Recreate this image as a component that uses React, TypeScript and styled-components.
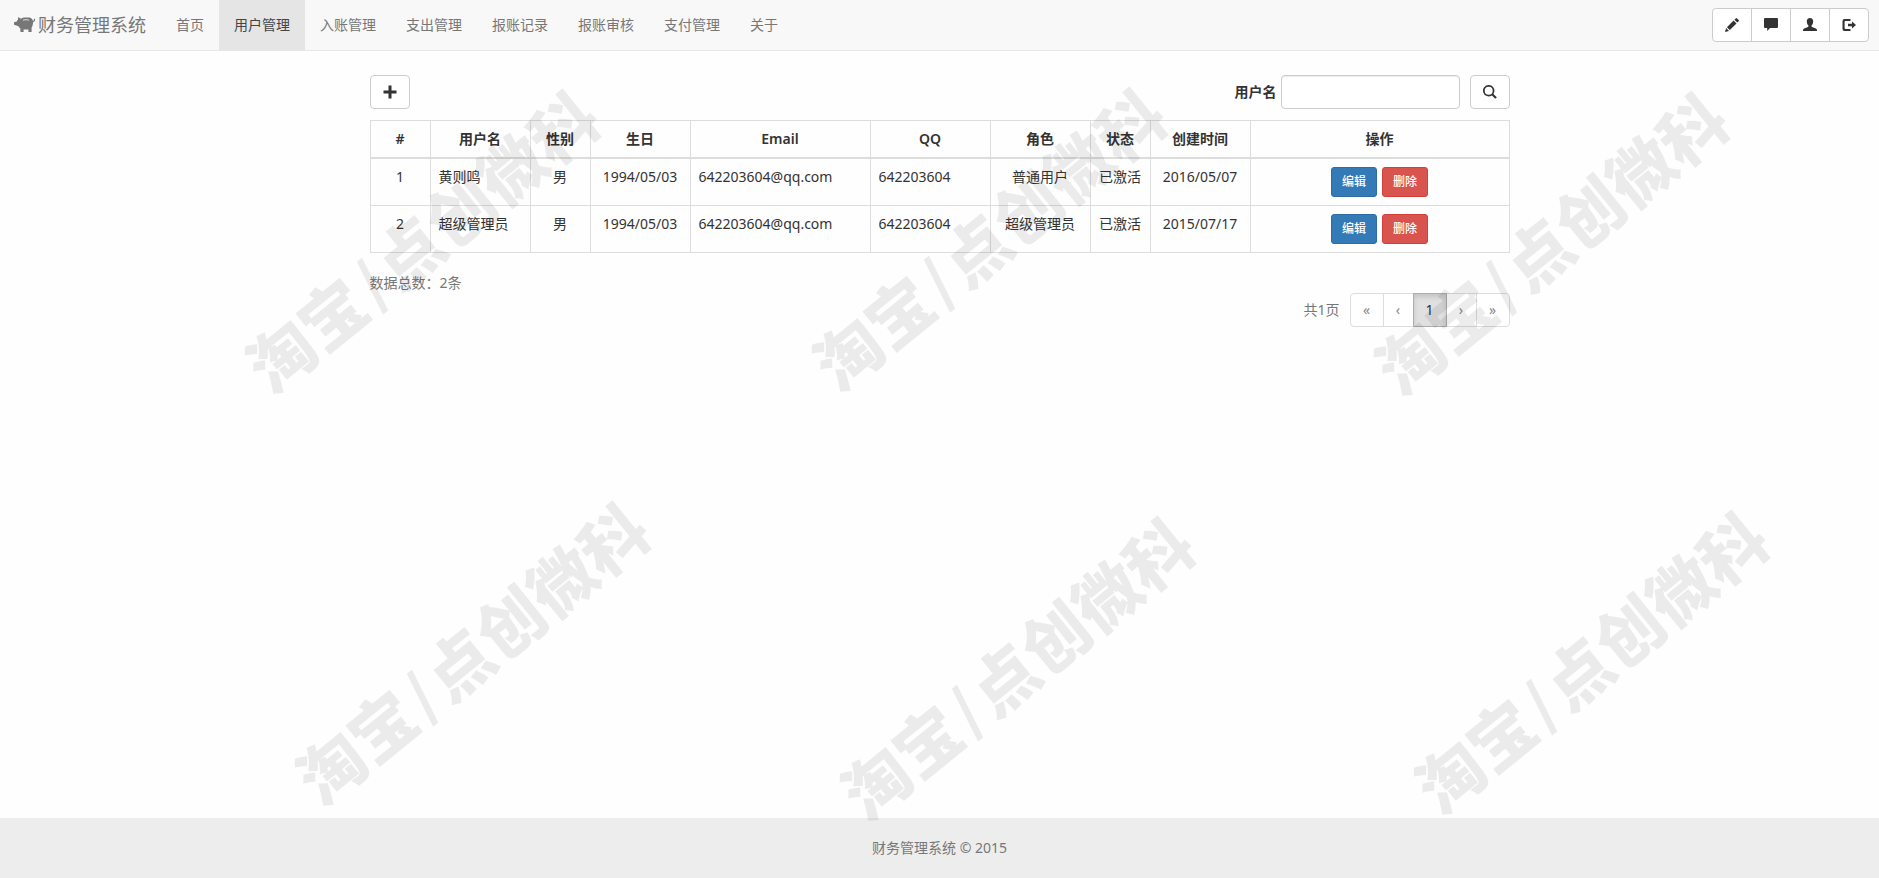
import React from "react";
import styled, { createGlobalStyle, css } from "styled-components";

const GlobalStyle = createGlobalStyle`
  *, *::before, *::after { box-sizing: border-box; }
  body {
    margin: 0;
    background: #fefefe;
    color: #333;
    font-family: "Noto Sans", "Noto Sans CJK SC", sans-serif;
    font-size: 14px;
    line-height: 20px;
  }
  button, input { font: inherit; color: inherit; }
`;

const Page = styled.div`
  position: relative;
  display: flex;
  flex-direction: column;
  min-height: 100vh;
  overflow: hidden;
`;

const Navbar = styled.header`
  display: flex;
  align-items: center;
  padding-right: 10px;
  background: #f8f8f8;
  border-bottom: 1px solid #e7e7e7;
`;

const Brand = styled.a`
  display: flex;
  align-items: center;
  gap: 2px;
  height: 50px;
  padding: 0 15px 0 14px;
  color: #777;
  font-size: 18px;
  text-decoration: none;
`;

const NavLinks = styled.nav`
  display: flex;
  flex: 1;
`;

const NavLink = styled.a<{ $active?: boolean }>`
  padding: 15px;
  color: ${(p) => (p.$active ? "#444" : "#777")};
  background: ${(p) => (p.$active ? "#e5e5e5" : "transparent")};
  text-decoration: none;
`;

const Icon = styled.svg<{ $size?: number }>`
  display: block;
  width: ${(p) => p.$size ?? 14}px;
  height: ${(p) => p.$size ?? 14}px;
  fill: currentColor;
`;

const Button = styled.button`
  display: flex;
  align-items: center;
  justify-content: center;
  height: 34px;
  padding: 0 12px;
  background: #fff;
  border: 1px solid #ccc;
  border-radius: 4px;
  cursor: pointer;
`;

const ButtonGroup = styled.div`
  display: flex;
  ${Button} { border-radius: 0; }
  ${Button} + ${Button} { margin-left: -1px; }
  ${Button}:first-child { border-radius: 4px 0 0 4px; }
  ${Button}:last-child { border-radius: 0 4px 4px 0; }
`;

const ToolButton = styled(Button)`
  width: 40px;
  padding: 0;
`;

const Main = styled.main`
  flex: 1;
  width: 100%;
  max-width: 1170px;
  margin: 0 auto;
  padding: 24px 15px;
`;

const Toolbar = styled.div`
  display: flex;
  justify-content: space-between;
  margin-bottom: 11px;
`;

const SearchForm = styled.form`
  display: flex;
  align-items: center;
  gap: 10px;
`;

const Field = styled.label`
  display: flex;
  align-items: center;
  gap: 4px;
  font-weight: 600;
`;

const TextInput = styled.input`
  width: 179px;
  height: 34px;
  padding: 6px 12px;
  background: #fff;
  border: 1px solid #ccc;
  border-radius: 4px;
  box-shadow: inset 0 1px 1px rgba(0, 0, 0, 0.075);
`;

const Table = styled.table`
  width: 100%;
  margin-bottom: 20px;
  border-collapse: collapse;
  table-layout: fixed;
  border: 1px solid #ddd;
`;

const cell = css`
  padding: 8px;
  border: 1px solid #ddd;
  vertical-align: top;
`;

const Th = styled.th<{ $width?: number }>`
  ${cell}
  width: ${(p) => (p.$width ? `${p.$width}px` : "auto")};
  border-bottom-width: 2px;
  font-weight: 600;
  text-align: center;
`;

const Td = styled.td<{ $left?: boolean }>`
  ${cell}
  text-align: ${(p) => (p.$left ? "left" : "center")};
  white-space: nowrap;
`;

const Actions = styled.div`
  display: flex;
  justify-content: center;
  gap: 5px;
`;

const ActionButton = styled.button<{ $danger?: boolean }>`
  height: 30px;
  padding: 0 10px;
  color: #fff;
  font-size: 12px;
  font-weight: 500;
  background: ${(p) => (p.$danger ? "#d9534f" : "#337ab7")};
  border: 1px solid ${(p) => (p.$danger ? "#d43f3a" : "#2e6da4")};
  border-radius: 3px;
  cursor: pointer;
`;

const Total = styled.p`
  margin: 0;
  color: #777;
`;

const Pager = styled.div`
  display: flex;
  align-items: center;
  justify-content: flex-end;
  gap: 10px;
  color: #777;
`;

const PageButton = styled(Button)<{ $active?: boolean; $narrow?: boolean }>`
  position: relative;
  z-index: ${(p) => (p.$active ? 1 : 0)};
  width: ${(p) => (p.$narrow ? 31 : 34)}px;
  padding: 0;
  color: ${(p) => (p.$active ? "#333" : "#888")};
  background: ${(p) => (p.$active ? "#e0e0e0" : "#fff")};
  border-color: ${(p) => (p.$active ? "#adadad" : "#ddd")};
  box-shadow: ${(p) => (p.$active ? "inset 0 3px 5px rgba(0, 0, 0, 0.125)" : "none")};
`;

const Footer = styled.footer`
  padding: 20px;
  background: #ededed;
  color: #777;
  text-align: center;
`;

const Watermark = styled.div<{ $x: number; $y: number }>`
  position: absolute;
  z-index: 2;
  left: ${(p) => p.$x}px;
  top: ${(p) => p.$y}px;
  display: flex;
  align-items: center;
  color: rgba(0, 0, 0, 0.075);
  font-family: "Noto Sans CJK SC", sans-serif;
  font-size: 66px;
  font-weight: 900;
  line-height: 66px;
  white-space: nowrap;
  transform: translate(-50%, -50%) rotate(-39deg);
  pointer-events: none;
`;

const Slash = styled.span`
  margin: 0 5px;
  font-size: 58px;
`;

const PiggyIcon = () => (
  <Icon $size={22} viewBox="0 0 22 22" aria-hidden="true">
    <path d="M4 3l3 1.800C8 4 9.500 3.600 11.500 3.600H15c2 0 3.500 1.300 3.900 3.200.9 0 1.200-.7.900-1.900l1.100-.3c.6 2-.2 3.400-1.900 3.600 0 2.300-.4 4-1.400 5.400V18h-3.200v-2.400h-4.800V18H6.400v-3.600c-.9-.6-1.500-1.300-1.900-2.200L0 10.800V8.200l2.800-.8c.3-.8.7-1.400 1.300-1.900z" />
    <path d="M9 6.200Q12 5 15 6.200" fill="none" stroke="#f8f8f8" strokeWidth=".8" />
  </Icon>
);

const PencilIcon = () => (
  <Icon viewBox="0 0 14 14" aria-hidden="true">
    <path d="M0 14l1.100-4 2.900 2.900zM1.900 9.200l6.700-6.700 2.900 2.900-6.700 6.700zM9.400 1.700L10.700.4q.7-.7 1.400 0l1.500 1.500q.7.700 0 1.400l-1.300 1.300z" />
  </Icon>
);

const CommentIcon = () => (
  <Icon viewBox="0 0 14 14" aria-hidden="true">
    <path d="M1 0h12q1 0 1 1v8q0 1-1 1H6l-2.800 3V10H1Q0 10 0 9V1q0-1 1-1z" />
  </Icon>
);

const UserIcon = () => (
  <Icon viewBox="0 0 14 14" aria-hidden="true">
    <path d="M7 0c2 0 3.200 1.300 3.200 3.300 0 1.700-.6 3.300-1.600 4.200-.3.500-.2 1.100.4 1.400l3.900 1.700q1.100.5 1.100 1.600V13H0v-.8q0-1.100 1.100-1.600L5 8.900c.6-.3.7-.9.4-1.400-1-.9-1.600-2.500-1.600-4.200C3.800 1.300 5 0 7 0z" />
  </Icon>
);

const LogoutIcon = () => (
  <Icon viewBox="0 0 14 14" aria-hidden="true">
    <path d="M2.500 1H8.500v2H3.500Q2.600 3 2.600 3.900v6.200q0 .9.900.9h5v2h-6Q.500 13 .5 11V3Q.5 1 2.500 1zM10 3.500L14 7l-4 3.500V8.200H6V5.800h4z" />
  </Icon>
);

const PlusIcon = () => (
  <Icon viewBox="0 0 14 14" aria-hidden="true">
    <path d="M5.500.5h3v5h5v3h-5v5h-3v-5h-5v-3h5z" />
  </Icon>
);

const SearchIcon = () => (
  <Icon viewBox="0 0 14 14" aria-hidden="true">
    <path
      fillRule="evenodd"
      d="M5.700 0a5.700 5.700 0 0 1 4.700 8.900l3.400 3.400-1.500 1.500-3.400-3.400A5.700 5.700 0 1 1 5.700 0zm0 1.700a4 4 0 1 0 0 8 4 4 0 0 0 0-8z"
    />
  </Icon>
);

const navItems = ["首页", "用户管理", "入账管理", "支出管理", "报账记录", "报账审核", "支付管理", "关于"];

const tools = [
  { label: "编辑资料", icon: <PencilIcon /> },
  { label: "消息", icon: <CommentIcon /> },
  { label: "个人中心", icon: <UserIcon /> },
  { label: "退出", icon: <LogoutIcon /> },
];

const columns: { title: string; width?: number }[] = [
  { title: "#", width: 60 },
  { title: "用户名", width: 100 },
  { title: "性别", width: 60 },
  { title: "生日", width: 100 },
  { title: "Email", width: 180 },
  { title: "QQ", width: 120 },
  { title: "角色", width: 100 },
  { title: "状态", width: 60 },
  { title: "创建时间", width: 100 },
  { title: "操作" },
];

const users = [
  { id: 1, name: "黄则鸣", sex: "男", birthday: "1994/05/03", email: "642203604@qq.com", qq: "642203604", role: "普通用户", status: "已激活", created: "2016/05/07" },
  { id: 2, name: "超级管理员", sex: "男", birthday: "1994/05/03", email: "642203604@qq.com", qq: "642203604", role: "超级管理员", status: "已激活", created: "2015/07/17" },
];

const pages = ["«", "‹", "1", "›", "»"];

const watermarks = [
  { x: 420, y: 239 },
  { x: 987, y: 237 },
  { x: 1549, y: 241 },
  { x: 470, y: 651 },
  { x: 1015, y: 666 },
  { x: 1589, y: 660 },
];

export default function App() {
  return (
    <Page>
      <GlobalStyle />
      <Navbar>
        <Brand href="#">
          <PiggyIcon />
          财务管理系统
        </Brand>
        <NavLinks>
          {navItems.map((item) => (
            <NavLink key={item} href="#" $active={item === "用户管理"}>
              {item}
            </NavLink>
          ))}
        </NavLinks>
        <ButtonGroup>
          {tools.map((tool) => (
            <ToolButton key={tool.label} type="button" aria-label={tool.label}>
              {tool.icon}
            </ToolButton>
          ))}
        </ButtonGroup>
      </Navbar>

      <Main>
        <Toolbar>
          <ToolButton type="button" aria-label="添加">
            <PlusIcon />
          </ToolButton>
          <SearchForm onSubmit={(e) => e.preventDefault()}>
            <Field>
              用户名
              <TextInput type="text" name="username" />
            </Field>
            <ToolButton type="submit" aria-label="搜索">
              <SearchIcon />
            </ToolButton>
          </SearchForm>
        </Toolbar>

        <Table>
          <thead>
            <tr>
              {columns.map((c) => (
                <Th key={c.title} scope="col" $width={c.width}>
                  {c.title}
                </Th>
              ))}
            </tr>
          </thead>
          <tbody>
            {users.map((u) => (
              <tr key={u.id}>
                <Td>{u.id}</Td>
                <Td $left>{u.name}</Td>
                <Td>{u.sex}</Td>
                <Td>{u.birthday}</Td>
                <Td $left>{u.email}</Td>
                <Td $left>{u.qq}</Td>
                <Td>{u.role}</Td>
                <Td>{u.status}</Td>
                <Td>{u.created}</Td>
                <Td>
                  <Actions>
                    <ActionButton type="button">编辑</ActionButton>
                    <ActionButton type="button" $danger>
                      删除
                    </ActionButton>
                  </Actions>
                </Td>
              </tr>
            ))}
          </tbody>
        </Table>

        <Total>数据总数：2条</Total>
        <Pager>
          <span>共1页</span>
          <ButtonGroup>
            {pages.map((p) => (
              <PageButton key={p} type="button" $active={p === "1"} $narrow={p === "‹" || p === "›"}>
                {p}
              </PageButton>
            ))}
          </ButtonGroup>
        </Pager>
      </Main>

      <Footer>财务管理系统 © 2015</Footer>

      {watermarks.map((w) => (
        <Watermark key={`${w.x}-${w.y}`} $x={w.x} $y={w.y} aria-hidden="true">
          淘宝<Slash>/</Slash>点创微科
        </Watermark>
      ))}
    </Page>
  );
}
